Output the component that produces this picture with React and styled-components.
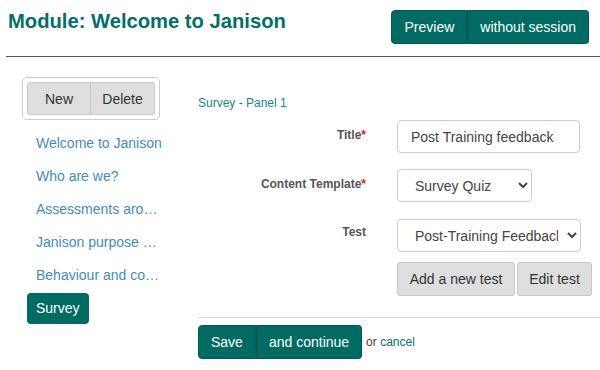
import React from "react";
import styled, { createGlobalStyle } from "styled-components";

const Global = createGlobalStyle`
  html, body { margin: 0; padding: 0; background: #fff; }
  body { font-family: "Liberation Sans", Arial, sans-serif; color: #333; }
  * { box-sizing: border-box; }
`;

const TEAL = "#006b63";

const Page = styled.div`
  width: 600px;
  height: 370px;
  overflow: hidden;
`;

const Header = styled.header`
  display: flex;
  align-items: flex-start;
  justify-content: space-between;
  height: 57px;
  margin-left: 6px;
  padding: 0 11px 0 2px;
  border-bottom: 1px solid #555;
`;

const Heading = styled.h1`
  margin: 9px 0 0;
  font-size: 20.2px;
  line-height: 24px;
  font-weight: bold;
  color: #00706b;
`;

const Group = styled.div`
  display: flex;
  margin-top: ${(p) => p.$top || 0}px;
`;

const PrimaryButton = styled.button`
  height: 34px;
  padding: 0 ${(p) => p.$pad || 12}px;
  font-family: inherit;
  font-size: 14px;
  color: #fff;
  background: ${TEAL};
  border: 1px solid #005a53;
  cursor: pointer;
  &:first-child { border-radius: 4px 0 0 4px; }
  &:last-child { border-radius: 0 4px 4px 0; border-left-color: #004d47; }
`;

const Main = styled.div`
  display: flex;
  padding-top: 20px;
`;

const Sidebar = styled.nav`
  width: 198px;
  flex: none;
  display: flex;
  flex-direction: column;
  align-items: flex-start;
`;

const ToolBox = styled.div`
  margin-left: 22px;
  padding: 4px;
  border: 1px solid #ccc;
  border-radius: 5px;
  display: flex;
`;

const GreyButton = styled.button`
  height: ${(p) => p.$h || 34}px;
  width: ${(p) => p.$w}px;
  padding: 0;
  font-family: inherit;
  font-size: 14px;
  color: #333;
  background: #dedede;
  border: 1px solid #c8c8c8;
  border-radius: 3px;
  cursor: pointer;
`;

const JoinedGrey = styled(GreyButton)`
  &:first-child { border-radius: 3px 0 0 3px; }
  &:last-child { border-radius: 0 3px 3px 0; border-left: none; }
`;

const NavList = styled.ul`
  list-style: none;
  margin: 8px 0 0;
  padding: 0;
  display: flex;
  flex-direction: column;
  align-items: flex-start;
`;

const NavItem = styled.li`
  margin-left: 27px;
  margin-bottom: 2px;
  height: 31px;
  line-height: 31px;
  padding: 0 9px;
  font-size: 14px;
  max-width: 145px;
  white-space: nowrap;
  overflow: hidden;
  text-overflow: ellipsis;
  border-radius: 4px;
  color: ${(p) => (p.$active ? "#fff" : "#428bca")};
  background: ${(p) => (p.$active ? TEAL : "transparent")};
`;

const Content = styled.section`
  flex: 1;
  padding-top: 19px;
`;

const PanelTitle = styled.div`
  font-size: 12px;
  line-height: 14px;
  color: #13878a;
  margin-bottom: 10px;
`;

const FormRow = styled.div`
  display: flex;
  align-items: flex-start;
  margin-bottom: ${(p) => p.$mb}px;
`;

const Label = styled.label`
  width: 168px;
  margin-right: 31px;
  text-align: right;
  font-size: 12px;
  font-weight: bold;
  color: #555;
  padding-top: ${(p) => p.$pt || 8}px;
`;

const Req = styled.span`
  color: #e8141a;
`;

const TextInput = styled.input`
  width: 183px;
  height: 33px;
  padding: 0 13px;
  font-family: inherit;
  font-size: 14px;
  color: #444;
  border: 1px solid #ccc;
  border-radius: 4px;
  outline: none;
`;

const Select = styled.select`
  width: ${(p) => p.$w}px;
  height: 33px;
  padding: 0 6px 0 13px;
  font-family: inherit;
  font-size: 14px;
  color: #444;
  background: #fff;
  border: 1px solid #ccc;
  border-radius: 4px;
  outline: none;
`;

const Buttons = styled.div`
  display: flex;
  gap: 2px;
  margin-left: 199px;
`;

const Footer = styled.div`
  margin-top: 21px;
  border-top: 1px solid #ddd;
  padding-top: 7px;
  display: flex;
  align-items: center;
`;

const OrText = styled.span`
  margin-left: 4px;
  font-size: 12px;
  color: #444;
`;

const CancelLink = styled.a`
  color: #05707a;
  text-decoration: none;
`;

export default function App() {
  const items = [
    "Welcome to Janison",
    "Who are we?",
    "Assessments around the world",
    "Janison purpose and values",
    "Behaviour and conduct",
  ];
  return (
    <Page>
      <Global />
      <Header>
        <Heading>Module: Welcome to Janison</Heading>
        <Group $top={10}>
          <PrimaryButton $pad={12}>Preview</PrimaryButton>
          <PrimaryButton $pad={12}>without session</PrimaryButton>
        </Group>
      </Header>
      <Main>
        <Sidebar>
          <ToolBox>
            <JoinedGrey $w={64} $h={33}>New</JoinedGrey>
            <JoinedGrey $w={64} $h={33}>Delete</JoinedGrey>
          </ToolBox>
          <NavList>
            {items.map((t) => (
              <NavItem key={t}>{t}</NavItem>
            ))}
            <NavItem $active>Survey</NavItem>
          </NavList>
        </Sidebar>
        <Content>
          <PanelTitle>Survey - Panel 1</PanelTitle>
          <FormRow $mb={16}>
            <Label $pt={8}>
              Title<Req>*</Req>
            </Label>
            <TextInput defaultValue="Post Training feedback" />
          </FormRow>
          <FormRow $mb={17}>
            <Label $pt={8}>
              Content Template<Req>*</Req>
            </Label>
            <Select $w={135} defaultValue="Survey Quiz">
              <option>Survey Quiz</option>
            </Select>
          </FormRow>
          <FormRow $mb={10}>
            <Label $pt={6}>Test</Label>
            <Select $w={184} defaultValue="Post-Training Feedback">
              <option>Post-Training Feedback</option>
            </Select>
          </FormRow>
          <Buttons>
            <GreyButton $w={118}>Add a new test</GreyButton>
            <GreyButton $w={75}>Edit test</GreyButton>
          </Buttons>
          <Footer>
            <Group>
              <PrimaryButton $pad={12}>Save</PrimaryButton>
              <PrimaryButton $pad={12}>and continue</PrimaryButton>
            </Group>
            <OrText>
              or <CancelLink href="#">cancel</CancelLink>
            </OrText>
          </Footer>
        </Content>
      </Main>
    </Page>
  );
}
